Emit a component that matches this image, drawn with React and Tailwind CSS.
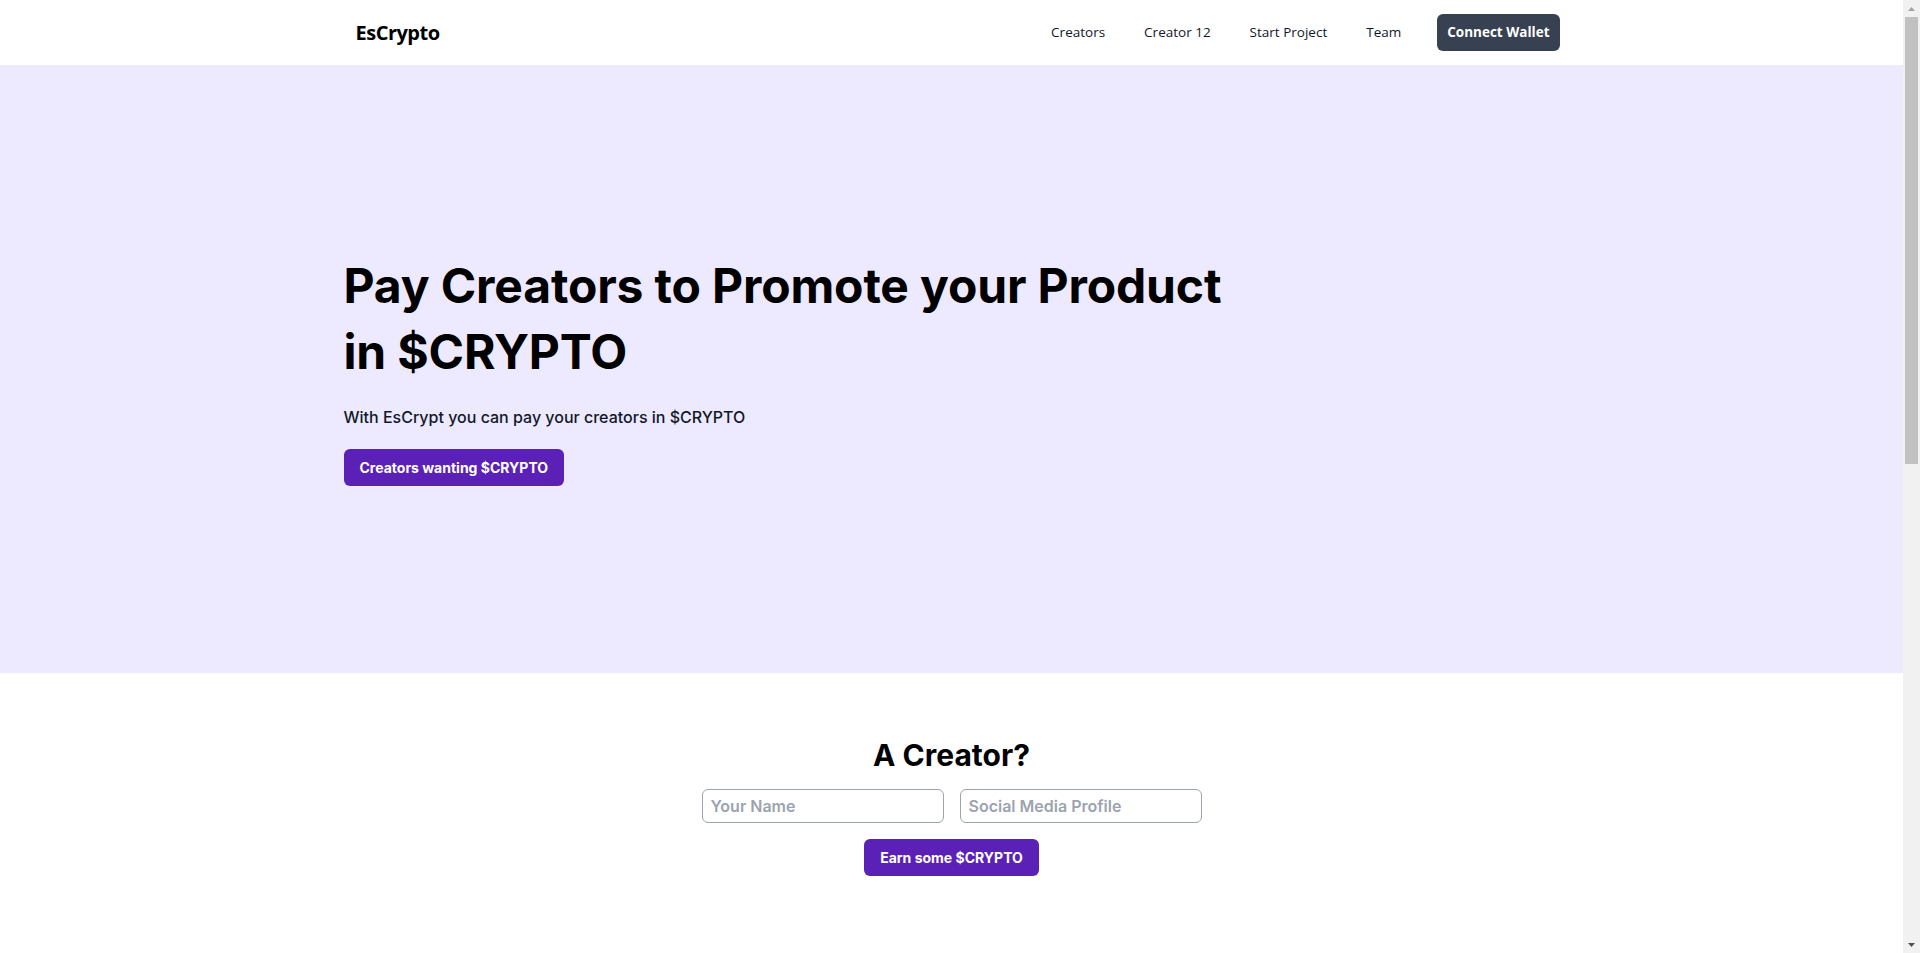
import React from "react";

const navFont = { fontFamily: '"Open Sans", "Noto Sans", sans-serif' };

const Navbar = () => {
    return (
        <header className="bg-white" style={navFont}>
            <div className="max-w-7xl mx-auto px-8 h-[65px] flex items-center justify-between">
                <a href="#" className="pl-3 text-xl font-bold text-black tracking-tight">
                    EsCrypto
                </a>
                <nav className="flex items-center">
                    <div className="flex items-center gap-[39px] text-[13.5px] text-gray-900">
                        <a href="#">Creators</a>
                        <a href="#">Creator 12</a>
                        <a href="#">Start Project</a>
                        <a href="#">Team</a>
                    </div>
                    <button className="ml-[36px] h-[37px] px-[10px] rounded-md bg-[#374151] text-white text-[13.5px] font-bold">
                        Connect Wallet
                    </button>
                </nav>
            </div>
        </header>
    );
};

const Hero = () => {
    return (
        <section className="bg-[#ede9fe] h-[608px] flex items-center">
            <div className="max-w-7xl w-full mx-auto px-8">
                <h1 className="text-5xl font-bold leading-snug tracking-[-0.15px] text-black">
                    Pay Creators to Promote your Product
                    <br />
                    in $CRYPTO
                </h1>
                <p className="mt-5 text-base font-medium text-gray-900">
                    With EsCrypt you can pay your creators in $CRYPTO
                </p>
                <button className="mt-5 px-4 py-2 rounded-md bg-[#5b21b6] text-white text-sm font-bold leading-[21px]">
                    Creators wanting $CRYPTO
                </button>
            </div>
        </section>
    );
};

const CreatorForm = () => {
    return (
        <section className="bg-white pt-16 pb-16 flex flex-col items-center">
            <h2 className="text-3xl font-bold text-black">A Creator?</h2>
            <form className="mt-4 flex flex-col items-center" onSubmit={(e) => e.preventDefault()}>
                <div className="flex gap-4">
                    <input
                        type="text"
                        placeholder="Your Name"
                        className="w-[242px] px-2 py-1 border border-[#9ca3af] rounded-md text-base font-semibold placeholder-[#9ca3af] outline-none"
                    />
                    <input
                        type="text"
                        placeholder="Social Media Profile"
                        className="w-[242px] px-2 py-1 border border-[#9ca3af] rounded-md text-base font-semibold placeholder-[#9ca3af] outline-none"
                    />
                </div>
                <button
                    type="submit"
                    className="mt-4 px-4 py-2 rounded-md bg-[#5b21b6] text-white text-sm font-bold leading-[21px]"
                >
                    Earn some $CRYPTO
                </button>
            </form>
        </section>
    );
};

// window scrollbar as it shows in the screenshot
const Scrollbar = () => {
    return (
        <div className="fixed top-0 right-0 w-[17px] h-screen bg-[#f1f1f1] flex flex-col">
            <div className="h-[17px] flex items-center justify-center">
                <svg width="7" height="4" viewBox="0 0 7 4">
                    <polygon points="3.5,0 7,4 0,4" fill="#a3a3a3" />
                </svg>
            </div>
            <div className="flex-1 px-[2px]">
                <div className="h-[447px] bg-[#c1c1c1]" />
            </div>
            <div className="h-[17px] flex items-center justify-center">
                <svg width="7" height="4" viewBox="0 0 7 4">
                    <polygon points="0,0 7,0 3.5,4" fill="#505050" />
                </svg>
            </div>
        </div>
    );
};

const App = () => {
    return (
        <div className="bg-white" style={{ fontFamily: 'Inter, "Noto Sans", sans-serif' }}>
            <div className="mr-[17px] min-h-[1964px]">
                <Navbar />
                <Hero />
                <CreatorForm />
            </div>
            <Scrollbar />
        </div>
    );
};

export default App;
